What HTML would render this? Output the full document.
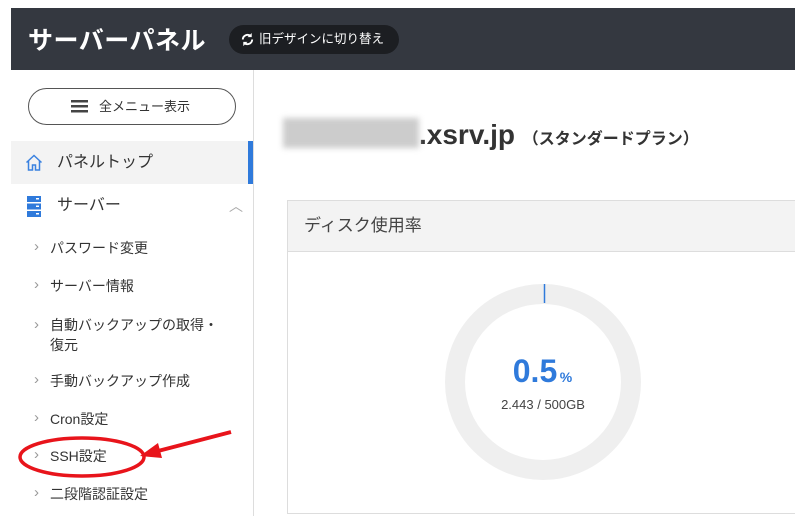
<!DOCTYPE html>
<html><head><meta charset="utf-8"><style>
*{box-sizing:border-box;margin:0;padding:0}
body{width:795px;height:516px;overflow:hidden;background:#fff;font-family:"Liberation Sans","Noto Sans CJK JP",sans-serif;color:#333;position:relative}
.hdr{position:absolute;left:11px;top:8px;width:784px;height:62px;background:#343840}
.title{position:absolute;left:17px;top:13px;color:#fff;font-size:25px;font-weight:bold;letter-spacing:0.5px}
.sw{position:absolute;left:218px;top:17px;width:170px;height:29px;border-radius:15px;background:#1c1e22;color:#fff;font-size:12.5px;line-height:29px;padding-left:30px}
.side{position:absolute;left:11px;top:70px;width:243px;height:446px;border-right:1px solid #ddd}
.menu{position:absolute;left:17px;top:18px;width:208px;height:37px;border:1px solid #555;border-radius:19px;font-size:13px;line-height:35px;padding-left:70px}
.top{position:absolute;left:0;top:71px;width:242px;height:43px;background:#f3f3f3;border-right:5px solid #2f7adb;font-size:16px;line-height:43px;padding-left:46px}
.srv{position:absolute;left:0;top:114px;width:242px;height:44px;font-size:16px;line-height:44px;padding-left:46px}
.it{position:absolute;left:39px;font-size:14px;color:#333}
.it:before{content:"›";position:absolute;left:-16px;color:#999;font-size:15px}
.dom{position:absolute;left:283px;top:118px;font-size:28px;font-weight:bold;color:#333}
.blur{display:inline-block;width:136px;height:30px;background:#ccc;filter:blur(3px);vertical-align:-4px}
.plan{font-size:16px}
.card{position:absolute;left:287px;top:200px;width:520px;height:314px;border:1px solid #ddd}
.ch{height:51px;background:#f3f3f3;border-bottom:1px solid #ddd;font-size:17px;line-height:50px;padding-left:16px;color:#444}
</style></head><body>
<div class="hdr"><div class="title">サーバーパネル</div>
<div class="sw"><svg style="position:absolute;left:11px;top:7px" width="15" height="15" viewBox="0 0 16 16"><path d="M3 8a5 5 0 0 1 8.5-3.5M13 8a5 5 0 0 1-8.5 3.5" stroke="#fff" stroke-width="2" fill="none"/><path d="M12.5 1v4.5H8z M3.5 15v-4.5H8z" fill="#fff"/></svg>旧デザインに切り替え</div></div>
<div class="side">
<div class="menu"><svg style="position:absolute;left:42px;top:11px" width="17" height="13"><rect y="0" width="17" height="2.5" fill="#444"/><rect y="5" width="17" height="2.5" fill="#444"/><rect y="10" width="17" height="2.5" fill="#444"/></svg>全メニュー表示</div>
<div class="top"><svg style="position:absolute;left:14px;top:13px" width="18" height="17" viewBox="0 0 18 17"><path d="M1.5 8.5L9 1.5l7.5 7M3.5 7v9h4v-5h3v5h4V7" stroke="#3b82e0" stroke-width="1.5" fill="none"/></svg>パネルトップ</div>
<div class="srv"><svg style="position:absolute;left:16px;top:12px" width="14" height="21"><rect width="14" height="6" fill="#2f7adb"/><rect y="7.5" width="14" height="6" fill="#2f7adb"/><rect y="15" width="14" height="6" fill="#2f7adb"/><rect x="9" y="2" width="3" height="1.5" fill="#fff"/><rect x="9" y="9.5" width="3" height="1.5" fill="#fff"/><rect x="9" y="17" width="3" height="1.5" fill="#fff"/></svg>サーバー<span style="position:absolute;left:218px;top:0;color:#aaa;font-size:14px">︿</span></div>
<div class="it" style="top:168px">パスワード変更</div>
<div class="it" style="top:206px">サーバー情報</div>
<div class="it" style="top:245px;line-height:20px">自動バックアップの取得・<br>復元</div>
<div class="it" style="top:301px">手動バックアップ作成</div>
<div class="it" style="top:339px">Cron設定</div>
<div class="it" style="top:376px">SSH設定</div>
<div class="it" style="top:414px">二段階認証設定</div>
</div>
<div class="dom"><span class="blur"></span>.xsrv.jp <span class="plan">（スタンダードプラン）</span></div>
<div class="card"><div class="ch">ディスク使用率</div></div>
<svg style="position:absolute;left:0;top:0" width="795" height="516">
<circle cx="543" cy="382" r="88" fill="none" stroke="#efefef" stroke-width="20"/>
<line x1="544.5" y1="284" x2="544.5" y2="303" stroke="#2f7adb" stroke-width="1.5"/>
<text x="535" y="382" text-anchor="middle" font-family="Liberation Sans,sans-serif" font-weight="bold" font-size="32" fill="#2f7adb">0.5</text>
<text x="566" y="382" text-anchor="middle" font-family="Liberation Sans,sans-serif" font-weight="bold" font-size="14" fill="#2f7adb">%</text>
<text x="543" y="409" text-anchor="middle" font-family="Liberation Sans,sans-serif" font-size="13" fill="#444">2.443 / 500GB</text>
<ellipse cx="82" cy="457" rx="62" ry="19" fill="none" stroke="#e8141b" stroke-width="3.5"/>
<line x1="231" y1="432" x2="158" y2="451" stroke="#e8141b" stroke-width="4"/>
<path d="M140 456l18-13 4 15z" fill="#e8141b"/>
</svg>
</body></html>
